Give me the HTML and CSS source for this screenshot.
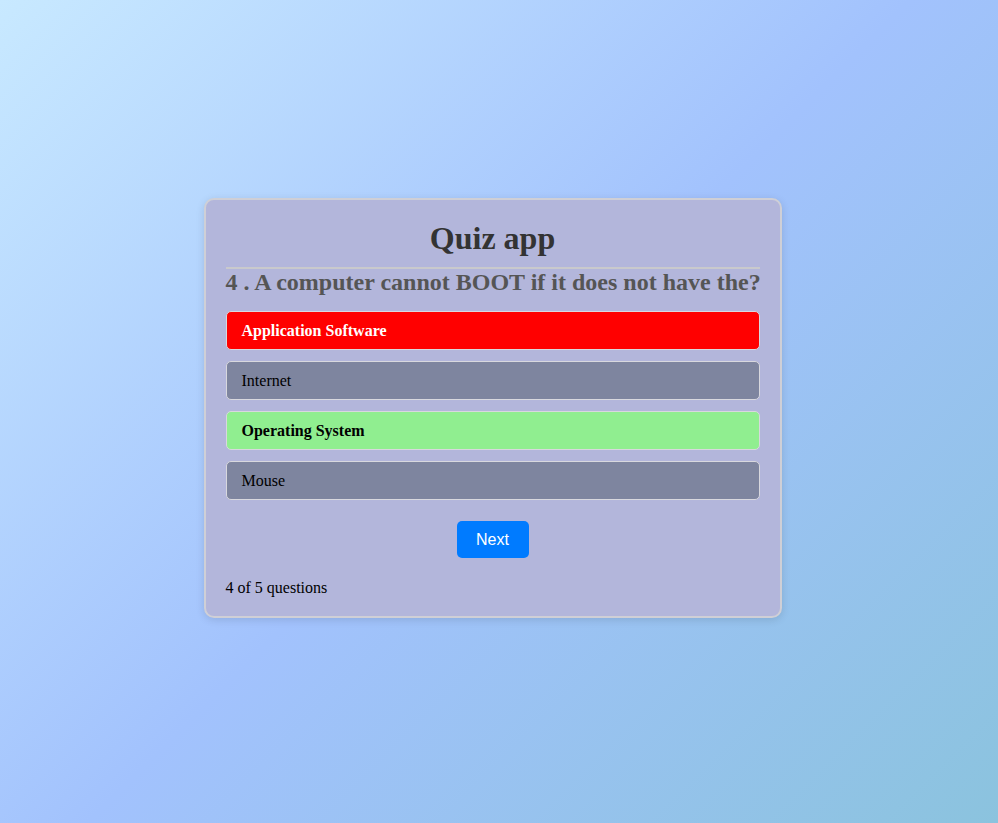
FILE: index.html
```html
<!DOCTYPE html>
<html>
<head>
<meta charset="utf-8">
<title>Quiz app</title>
<link rel="stylesheet" href="styles.css">
</head>
<body>
<div class="page">
  <div class="card">
    <h1 class="title">Quiz app</h1>
    <h2 class="question">4 . A computer cannot BOOT if it does not have the?</h2>
    <div class="options">
      <button class="option wrong">Application Software</button>
      <button class="option">Internet</button>
      <button class="option correct">Operating System</button>
      <button class="option">Mouse</button>
    </div>
    <div class="actions">
      <button class="next">Next</button>
    </div>
    <p class="counter">4 of 5 questions</p>
  </div>
</div>
</body>
</html>
```
FILE: styles.css
```css
html, body {
  margin: 0;
  padding: 0;
  height: 100%;
}
body {
  background: linear-gradient(135deg, #c8e9ff 0%, #a2c2fd 50%, #8bc3de 100%);
  font-family: "Liberation Serif", "Times New Roman", serif;
}
.page {
  min-height: 100%;
  display: flex;
  justify-content: center;
  padding-top: 198px;
  padding-right: 13px;
  box-sizing: border-box;
}
.card {
  width: 578px;
  height: 420px;
  box-sizing: border-box;
  background: #b3b6db;
  border: 2px solid #cfcfd6;
  border-radius: 10px;
  padding: 20px;
  box-shadow: 0 2px 8px rgba(0, 0, 0, 0.12);
}
.title {
  margin: 0;
  font-size: 32px;
  text-align: center;
  color: #333;
  padding-bottom: 10px;
  border-bottom: 2px solid #c9c9cc;
  line-height: 37px;
}
.question {
  margin: 0;
  font-size: 24px;
  color: #555;
  line-height: 27px;
  white-space: nowrap;
}
.options {
  display: flex;
  flex-direction: column;
  gap: 11px;
  margin-top: 15px;
}
.option {
  height: 39px;
  box-sizing: border-box;
  text-align: left;
  padding: 0 15px;
  font-family: "Liberation Serif", "Times New Roman", serif;
  font-size: 16px;
  background: #7e859f;
  color: #000;
  border: 1px solid #d8d8de;
  border-radius: 5px;
}
.option.wrong {
  background: #ff0000;
  color: #fff;
  font-weight: bold;
}
.option.correct {
  background: #90ee90;
  color: #000;
  font-weight: bold;
}
.actions {
  display: flex;
  justify-content: center;
  margin-top: 21px;
}
.next {
  width: 72px;
  height: 37px;
  background: #007bff;
  color: #fff;
  border: none;
  border-radius: 5px;
  font-family: "Liberation Sans", Arial, sans-serif;
  font-size: 16px;
}
.counter {
  margin: 21px 0 0;
  font-size: 16px;
  line-height: 18px;
}
```
